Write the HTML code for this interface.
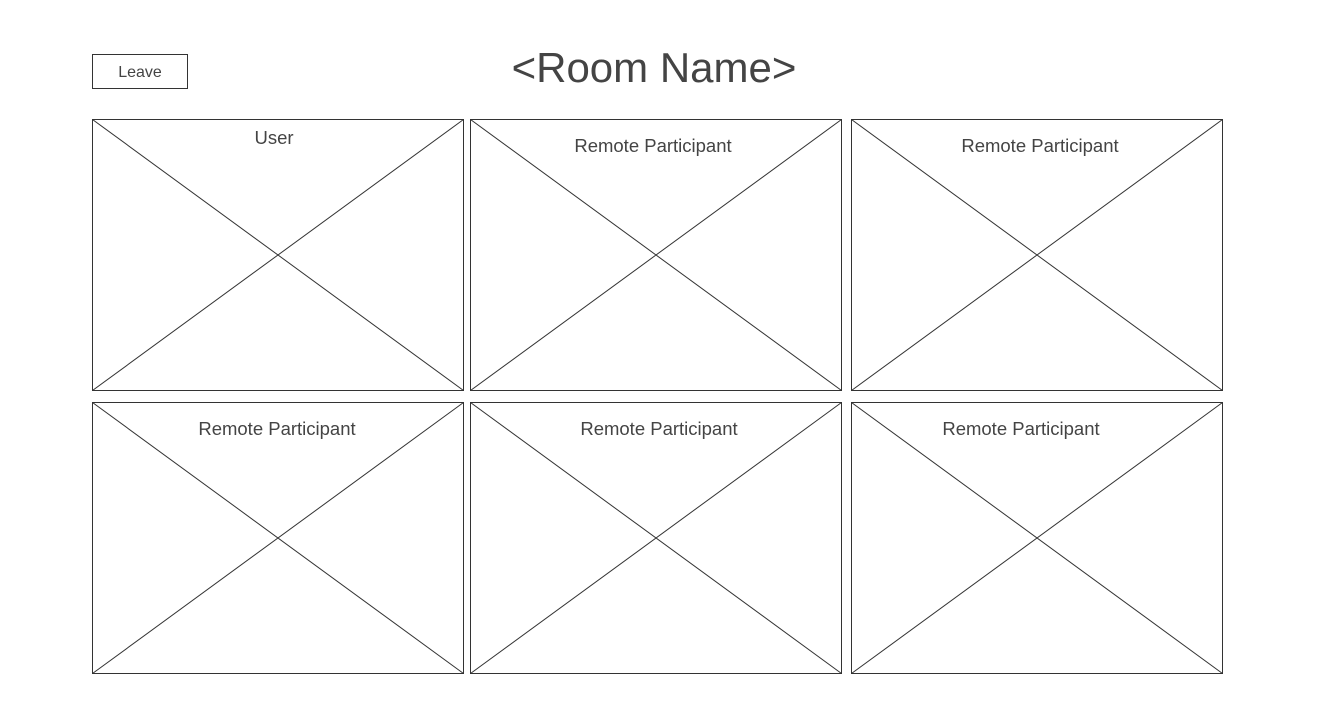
<!DOCTYPE html>
<html><head><meta charset="utf-8"><style>
html,body{margin:0;padding:0;background:#fff;width:1333px;height:713px;overflow:hidden}
svg{display:block}
text{font-family:"Liberation Sans",Arial,sans-serif;fill:#444}
</style></head><body>
<svg width="1333" height="713" viewBox="0 0 1333 713">
<g fill="none" stroke="#333" stroke-width="1">
<rect x="92.5" y="54.5" width="95" height="34"/>
<rect x="92.5" y="119.5" width="371" height="271"/><path d="M92.5 119.5L463.5 390.5M463.5 119.5L92.5 390.5"/>
<rect x="470.5" y="119.5" width="371" height="271"/><path d="M470.5 119.5L841.5 390.5M841.5 119.5L470.5 390.5"/>
<rect x="851.5" y="119.5" width="371" height="271"/><path d="M851.5 119.5L1222.5 390.5M1222.5 119.5L851.5 390.5"/>
<rect x="92.5" y="402.5" width="371" height="271"/><path d="M92.5 402.5L463.5 673.5M463.5 402.5L92.5 673.5"/>
<rect x="470.5" y="402.5" width="371" height="271"/><path d="M470.5 402.5L841.5 673.5M841.5 402.5L470.5 673.5"/>
<rect x="851.5" y="402.5" width="371" height="271"/><path d="M851.5 402.5L1222.5 673.5M1222.5 402.5L851.5 673.5"/>
</g>
<text x="140" y="77" font-size="16" text-anchor="middle">Leave</text>
<text x="654" y="82" font-size="42" text-anchor="middle">&lt;Room Name&gt;</text>
<g font-size="18.5" text-anchor="middle">
<text x="274" y="144">User</text>
<text x="653" y="152">Remote Participant</text>
<text x="1040" y="152">Remote Participant</text>
<text x="277" y="435">Remote Participant</text>
<text x="659" y="435">Remote Participant</text>
<text x="1021" y="435">Remote Participant</text>
</g>
</svg>
</body></html>
